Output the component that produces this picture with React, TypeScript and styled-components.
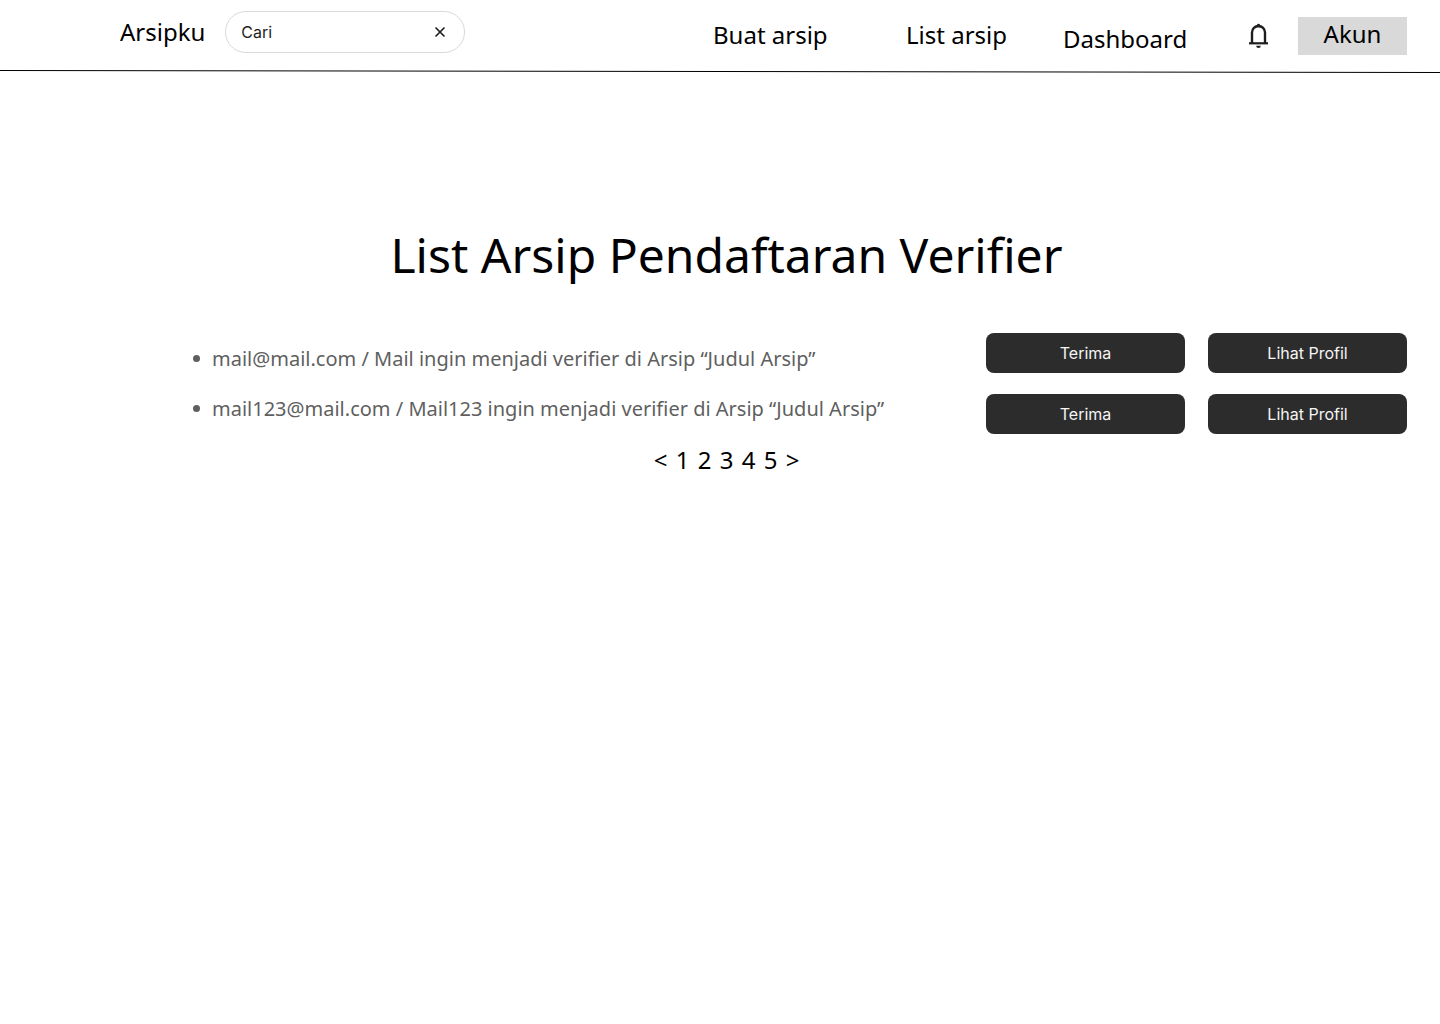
import React, { useState } from 'react';
import styled, { createGlobalStyle } from 'styled-components';

const GlobalStyle = createGlobalStyle`
  *, *::before, *::after {
    box-sizing: border-box;
  }

  body {
    margin: 0;
    background: #ffffff;
    color: #000000;
    font-family: 'Noto Sans', sans-serif;
  }

  ul, h1 {
    margin: 0;
    padding: 0;
    list-style: none;
    font-weight: 400;
  }

  button {
    border: 0;
    padding: 0;
    background: none;
    color: inherit;
    font: inherit;
    cursor: pointer;
  }
`;

const Header = styled.header`
  display: flex;
  justify-content: space-between;
  align-items: flex-start;
  height: 70px;
  padding: 11px 33px 0 120px;
`;

const Group = styled.div`
  display: flex;
  align-items: center;
  gap: 20px;
`;

const Brand = styled.a`
  color: inherit;
  font-size: 24px;
  line-height: 32px;
  text-decoration: none;
`;

const SearchBox = styled.form`
  display: flex;
  align-items: center;
  gap: 8px;
  width: 240px;
  height: 42px;
  padding: 0 16px 0 15px;
  border: 1px solid #d9d9d9;
  border-radius: 21px;
  background: #ffffff;
`;

const SearchInput = styled.input`
  flex: 1;
  min-width: 0;
  padding: 0;
  border: 0;
  outline: 0;
  background: transparent;
  color: #1e1e1e;
  font-family: Inter, sans-serif;
  font-size: 16px;
  line-height: 20px;

  &::placeholder {
    color: #1e1e1e;
    opacity: 1;
  }
`;

const IconButton = styled.button`
  display: flex;
  color: #1e1e1e;
`;

const Nav = styled.nav`
  display: flex;
  align-items: flex-start;
`;

const NavList = styled.ul`
  display: grid;
  grid-template-columns: 193px 157px 184px;
  height: 44px;
  padding-top: 8px;
`;

const NavItem = styled.li<{ $low?: boolean }>`
  align-self: ${({ $low }) => ($low ? 'end' : 'start')};
`;

const NavLink = styled.a`
  color: inherit;
  font-size: 24px;
  line-height: 32px;
  text-decoration: none;
`;

const Actions = styled.div`
  display: flex;
  align-items: center;
  gap: 27px;
  padding-top: 6px;
`;

const AccountButton = styled.button`
  width: 109px;
  height: 38px;
  padding-bottom: 4px;
  background: #d9d9d9;
  font-size: 24px;
  line-height: 32px;
`;

const Rule = styled.svg`
  display: block;
  width: 100%;
  height: 3px;
`;

const Main = styled.main`
  display: flex;
  flex-direction: column;
  padding: 147px 33px 48px 46px;
`;

const Title = styled.h1`
  font-size: 48px;
  line-height: 70px;
  text-align: center;
`;

const Requests = styled.section`
  display: flex;
  justify-content: space-between;
  align-items: center;
  gap: 24px;
  margin-top: 43px;
  padding-left: 147px;
`;

const RequestList = styled.ul`
  display: grid;
  gap: 20px;
`;

const RequestItem = styled.li`
  display: flex;
  align-items: center;
  gap: 12px;
  color: #5f5f5f;
  font-size: 20px;
  line-height: 30px;

  &::before {
    content: '';
    flex: none;
    width: 7px;
    height: 7px;
    border-radius: 50%;
    background: currentColor;
  }
`;

const ButtonGrid = styled.div`
  display: grid;
  grid-template-columns: 199px 199px;
  gap: 21px 23px;
`;

const DarkButton = styled.button`
  height: 40px;
  border-radius: 8px;
  background: #2c2c2c;
  color: #f5f5f5;
  font-family: Inter, sans-serif;
  font-size: 16px;
  line-height: 20px;
`;

const Pagination = styled.nav`
  display: flex;
  justify-content: center;
  gap: 8px;
  margin-top: 10px;
`;

const PageButton = styled.button`
  width: 14px;
  font-size: 24px;
  line-height: 32px;
`;

const requests = [
  { id: 'mail', text: 'mail@mail.com / Mail ingin menjadi verifier di Arsip “Judul Arsip”' },
  { id: 'mail123', text: 'mail123@mail.com / Mail123 ingin menjadi verifier di Arsip “Judul Arsip”' },
];

const pages = ['<', '1', '2', '3', '4', '5', '>'];

function CloseIcon() {
  return (
    <svg width="16" height="16" viewBox="0 0 16 16" fill="none" aria-hidden="true">
      <path d="M12 4 4 12M4 4l8 8" stroke="currentColor" strokeWidth="1.7" strokeLinecap="round" />
    </svg>
  );
}

function BellIcon() {
  return (
    <svg width="24" height="28" viewBox="0 0 24 28" fill="none" aria-hidden="true">
      <path d="M2 21.300h19" stroke="currentColor" strokeWidth="2.200" />
      <path d="M5 21V10.500a6.300 6.300 0 0 1 13 0V21" stroke="currentColor" strokeWidth="2.400" />
      <path d="M9.200 5.200 9.900 3a1.700 1.700 0 0 1 3.200 0l.7 2.200z" fill="currentColor" />
      <path d="M9.200 23.800h4.600a2.300 2.300 0 0 1-4.600 0z" fill="currentColor" />
    </svg>
  );
}

export default function App() {
  const [query, setQuery] = useState('');

  return (
    <>
      <GlobalStyle />
      <Header>
        <Group>
          <Brand href="#">Arsipku</Brand>
          <SearchBox role="search" onSubmit={(event) => event.preventDefault()}>
            <SearchInput
              type="text"
              aria-label="Cari"
              placeholder="Cari"
              value={query}
              onChange={(event) => setQuery(event.target.value)}
            />
            <IconButton type="button" aria-label="Hapus pencarian" onClick={() => setQuery('')}>
              <CloseIcon />
            </IconButton>
          </SearchBox>
        </Group>
        <Nav>
          <NavList>
            <NavItem>
              <NavLink href="#buat">Buat arsip</NavLink>
            </NavItem>
            <NavItem>
              <NavLink href="#list">List arsip</NavLink>
            </NavItem>
            <NavItem $low>
              <NavLink href="#dashboard">Dashboard</NavLink>
            </NavItem>
          </NavList>
          <Actions>
            <IconButton type="button" aria-label="Notifikasi">
              <BellIcon />
            </IconButton>
            <AccountButton type="button">Akun</AccountButton>
          </Actions>
        </Nav>
      </Header>
      <Rule viewBox="0 0 1440 3" preserveAspectRatio="none" aria-hidden="true">
        <path d="M0 .5 1440 2.500" stroke="#000000" strokeWidth="1" />
      </Rule>
      <Main>
        <Title>List Arsip Pendaftaran Verifier</Title>
        <Requests>
          <RequestList>
            {requests.map(({ id, text }) => (
              <RequestItem key={id}>{text}</RequestItem>
            ))}
          </RequestList>
          <ButtonGrid>
            {requests.map(({ id }) => (
              <React.Fragment key={id}>
                <DarkButton type="button">Terima</DarkButton>
                <DarkButton type="button">Lihat Profil</DarkButton>
              </React.Fragment>
            ))}
          </ButtonGrid>
        </Requests>
        <Pagination aria-label="Halaman">
          {pages.map((page) => (
            <PageButton type="button" key={page}>
              {page}
            </PageButton>
          ))}
        </Pagination>
      </Main>
    </>
  );
}
